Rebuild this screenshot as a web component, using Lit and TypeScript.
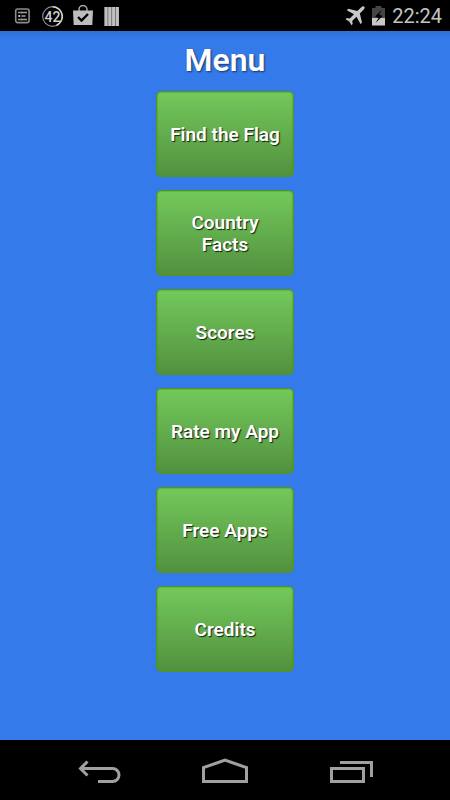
import { LitElement, html, css } from "lit";
import { customElement } from "lit/decorators.js";

const ITEMS = ["Find the Flag", "Country Facts", "Scores", "Rate my App", "Free Apps", "Credits"];

@customElement("status-bar")
class StatusBar extends LitElement {
  static styles = css`
    :host {
      display: flex;
      align-items: center;
      justify-content: space-between;
      box-sizing: border-box;
      height: 31px;
      padding: 0 8px 0 14px;
      background: #000;
      color: #c4c4c4;
      font: 400 20px/32px Roboto, sans-serif;
    }
    .group {
      display: flex;
      align-items: center;
    }
    .notices {
      gap: 10px;
    }
    .system {
      gap: 7px;
    }
    svg {
      display: block;
    }
    .count {
      font: 500 14px Roboto, sans-serif;
    }
  `;

  render() {
    return html`
      <div class="group notices">
        <svg width="17" height="22" viewBox="0 0 17 22" fill="none" stroke="#8c8c8c">
          <rect x="1.7" y="4" width="13.4" height="13.6" rx="2" stroke-width="1.6" />
          <path d="M4 7.5h2M4 11h2M4 14.5h2M7.5 7.5h5.5M7.5 11h4M7.5 14.5h5.5" stroke="#a0a0a0" stroke-width="1.6" />
          <path d="M6.5 7.5h1.2M5 11h1.2M6.5 14.5h1.2" stroke="#c4d0dc" stroke-width="2" />
        </svg>
        <svg width="22" height="22" viewBox="0 0 22 22" fill="none">
          <circle cx="11.5" cy="11.5" r="9.8" stroke="#888" stroke-width="1.2" />
          <path d="M11.5 1.7a9.8 9.8 0 0 1 4 18.7" stroke="#d0d0d0" stroke-width="1.6" />
          <text class="count" x="11.5" y="16.500" text-anchor="middle" fill="#d0d0d0">42</text>
        </svg>
        <svg width="20" height="22" viewBox="0 0 20 22" fill="none">
          <path d="M6 6V4.500a4 4 0 0 1 8 0V6" stroke="#b5b5b5" stroke-width="1.400" />
          <path d="M0 5.500h20l-.7 14.500H.7z" fill="#bdbdbd" />
          <path d="M5 12l3.500 3.500L15 9" stroke="#000" stroke-width="2.400" />
        </svg>
        <svg width="17" height="22" viewBox="0 0 17 22">
          <path d="M1.500 2h14.500v19H1.500z" fill="#666" />
          <path d="M1.500 2h3v19h-3zM5.300 2h3v19h-3zM9.100 2h3v19h-3zM12.900 2h3v19h-3z" fill="#c0c0c0" />
        </svg>
      </div>
      <div class="group system">
        <svg width="20" height="20" viewBox="0 0 20 20" fill="#c8c8c8">
          <path
            d="M19.300.7c.7.7.3 1.900-.6 2.900L14.800 7.500l2.200 9-1.500 1.500-4-7.200-4.300 4.200.5 3-1.200 1.200-2.200-3.700L.6 13.300l1.200-1.200 3 .5 4.200-4.300-7.200-4L3.300 2.800l9 2.200L16.300 1.200c1-.9 2.300-1.200 3-.5z"
          />
        </svg>
        <svg width="13" height="20" viewBox="0 0 13 20">
          <path d="M3.500 0h6v2H13v10H0V2h3.500z" fill="#454545" />
          <path d="M0 12h13v7.500H0z" fill="#c8c8c8" />
          <path d="M10 3.500L3 10.500l3.500 1.500L3.500 17l7-7L7 8.500z" fill="#000" />
        </svg>
        <time>22:24</time>
      </div>
    `;
  }
}

@customElement("nav-bar")
class NavBar extends LitElement {
  static styles = css`
    :host {
      display: flex;
      align-items: center;
      justify-content: center;
      height: 60px;
      background: #000;
    }
    nav {
      display: flex;
      flex: 0 1 378px;
      justify-content: space-between;
    }
    button {
      display: flex;
      flex: 1;
      justify-content: center;
      align-items: center;
      height: 60px;
      padding: 0;
      border: 0;
      background: none;
    }
    svg {
      display: block;
      fill: none;
      stroke: #a0a0a0;
      stroke-width: 3;
    }
  `;

  render() {
    return html`
      <nav>
        <button aria-label="Back">
          <svg width="46" height="28" viewBox="0 0 46 28">
            <path d="M4 12.500H36.500a6.500 6.500 0 0 1 0 13H22M11.500 5.500L4.500 12.500l7 7" />
          </svg>
        </button>
        <button aria-label="Home">
          <svg width="46" height="28" viewBox="0 0 46 28">
            <path d="M1.500 25.500v-14L23 4.200l21.500 7.300v14z" />
          </svg>
        </button>
        <button aria-label="Recent apps">
          <svg width="46" height="28" viewBox="0 0 46 28">
            <path d="M3.500 12.500h32v13h-32zM12 6.500h31.500V21" />
          </svg>
        </button>
      </nav>
    `;
  }
}

@customElement("app-root")
class AppRoot extends LitElement {
  static styles = css`
    :host {
      display: flex;
      flex-direction: column;
      min-height: 100vh;
      background: #357aea;
      font-family: Roboto, sans-serif;
    }
    main {
      flex: 1;
      display: flex;
      flex-direction: column;
      align-items: center;
      padding: 10px 16px 16px;
      background: linear-gradient(#3070d5, #357aea 8px);
    }
    h1 {
      margin: 0 0 12px;
      color: #fff;
      font-size: 32px;
      font-weight: 600;
      line-height: 38px;
      text-shadow: 1px 1px 2px rgba(0, 0, 0, 0.6);
    }
    .menu {
      display: flex;
      flex-direction: column;
      gap: 13px;
    }
    .item {
      box-sizing: border-box;
      width: 138px;
      height: 86px;
      padding: 2px 10px 0;
      border: 1px solid #4f951f;
      border-radius: 5px;
      background: linear-gradient(#73c95b, #52913f);
      box-shadow: inset 0 0 1px 1px rgba(79, 149, 31, 0.4);
      color: #fff;
      font: 600 19px/22px Roboto, sans-serif;
      text-shadow: 1px 1px 1px rgba(0, 0, 0, 0.8);
    }
  `;

  render() {
    return html`
      <status-bar></status-bar>
      <main>
        <h1>Menu</h1>
        <div class="menu">${ITEMS.map((item) => html`<button class="item">${item}</button>`)}</div>
      </main>
      <nav-bar></nav-bar>
    `;
  }
}
